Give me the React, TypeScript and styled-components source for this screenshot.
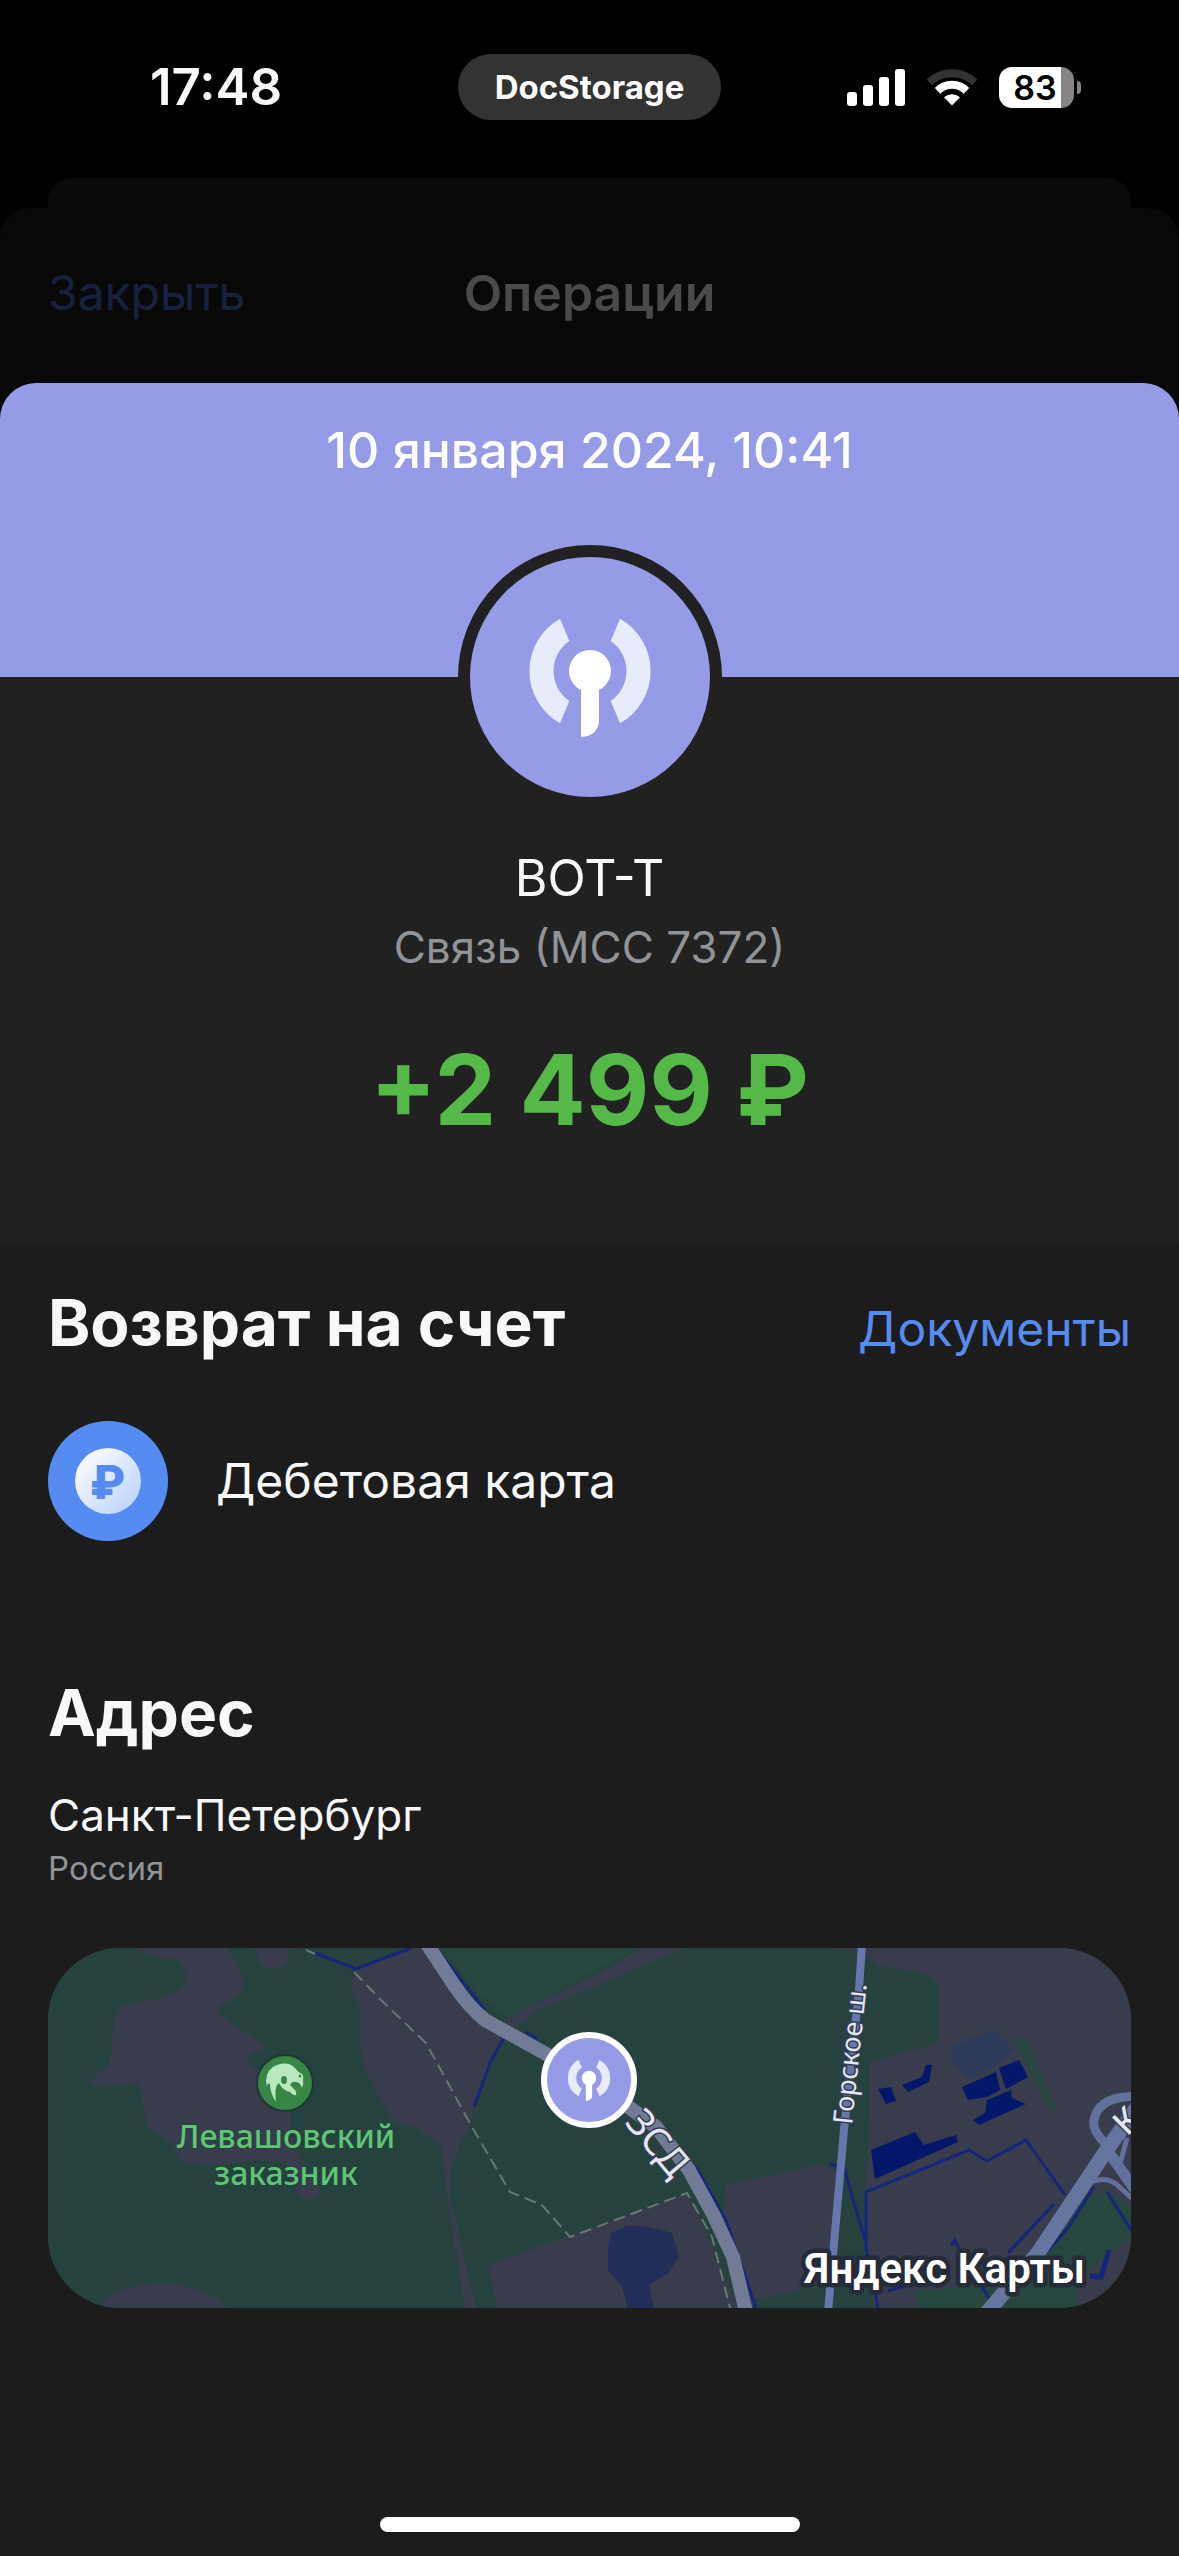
import React from "react";
import styled, { createGlobalStyle } from "styled-components";

const color = {
  lilac: "#959be6",
  panel: "#212121",
  page: "#1c1c1c",
  text: "#f8f8f8",
  muted: "#909499",
  blue: "#568bf2",
  green: "#54b946",
};

const GlobalStyle = createGlobalStyle`
  * { box-sizing: border-box; }
  body {
    margin: 0;
    background: #000;
    color: ${color.text};
    font-family: Inter, "Liberation Sans", sans-serif;
  }
  h1, h2, p { margin: 0; font-weight: inherit; }
  svg { display: block; }
`;

const Screen = styled.div`
  display: flex;
  flex-direction: column;
  min-height: 100vh;
`;

const StatusBar = styled.header`
  display: grid;
  grid-template-columns: 306px 1fr 358px;
  align-items: center;
  height: 178px;
  padding: 0 98px 4px 150px;
`;

const StatusIcons = styled.div`
  display: flex;
  align-items: center;
  justify-content: flex-end;
  gap: 22px;
`;

const Clock = styled.time`
  font-size: 51px;
  line-height: 60px;
  font-weight: 600;
`;

const PlainButton = styled.button`
  padding: 0;
  border: 0;
  background: none;
  font: inherit;
  cursor: pointer;
`;

const IslandPill = styled(PlainButton)`
  justify-self: center;
  height: 66px;
  padding: 0 37px;
  border-radius: 33px;
  background: #333;
  color: #fff;
  font-size: 33px;
  line-height: 42px;
  font-weight: 700;
`;

const Battery = styled.div`
  display: flex;
  align-items: center;
  gap: 3px;
`;

const BatteryBody = styled.div<{ $level: number }>`
  width: 75px;
  height: 41px;
  padding-right: 3px;
  border-radius: 13px;
  background: linear-gradient(to right, #fff ${(p) => p.$level}%, #858585 ${(p) => p.$level}%);
  color: #000;
  font-size: 34px;
  line-height: 42px;
  font-weight: 600;
  text-align: center;
`;

const BatteryTip = styled.div`
  width: 4px;
  height: 13px;
  border-radius: 0 6px 6px 0;
  background: #858585;
`;

const FarSheet = styled.div`
  height: 30px;
  margin: 0 48px;
  border-radius: 24px 24px 0 0;
  background: #0a0a0a;
`;

const NearSheet = styled.div`
  display: flex;
  flex-direction: column;
  flex: 1;
  border-radius: 30px 30px 0 0;
  background: #080808;
`;

const NavBar = styled.nav`
  display: grid;
  grid-template-columns: 1fr auto 1fr;
  align-items: center;
  height: 175px;
  padding: 0 48px 6px;
  font-size: 50px;
  line-height: 60px;
`;

const CloseButton = styled(PlainButton)`
  justify-self: start;
  color: #17213f;
  font-size: 48px;
`;

const NavTitle = styled.p`
  color: #4a4a4a;
  font-weight: 600;
`;

const Sheet = styled.main`
  display: flex;
  flex-direction: column;
  flex: 1;
  overflow: hidden;
  border-radius: 36px 36px 0 0;
  background: ${color.page};
`;

const Banner = styled.div`
  height: 294px;
  padding-top: 37px;
  background: ${color.lilac};
  color: #fff;
  font-size: 50px;
  line-height: 60px;
  font-weight: 500;
  text-align: center;
`;

const Summary = styled.section`
  display: flex;
  flex-direction: column;
  align-items: center;
  padding-bottom: 100px;
  background: linear-gradient(to top, ${color.page}, ${color.panel} 12px);
`;

const Avatar = styled.div`
  width: 264px;
  height: 264px;
  margin: -132px 0 39px;
  border: 12px solid ${color.panel};
  border-radius: 50%;
  background: ${color.lilac};
`;

const Merchant = styled.h1`
  font-size: 50px;
  line-height: 60px;
  font-weight: 400;
`;

const Category = styled.p`
  margin-top: 12px;
  color: ${color.muted};
  font-size: 44px;
  line-height: 54px;
`;

const Amount = styled.p`
  margin-top: 56px;
  color: ${color.green};
  font-size: 98px;
  line-height: 120px;
  font-weight: 700;
`;

const Section = styled.section<{ $top: number }>`
  padding: ${(p) => p.$top}px 48px 0;
`;

const SectionHead = styled.div`
  display: flex;
  align-items: baseline;
  justify-content: space-between;
`;

const SectionTitle = styled.h2`
  font-size: 64px;
  line-height: 72px;
  font-weight: 700;
`;

const DocsLink = styled.a`
  color: ${color.blue};
  font-size: 48px;
  line-height: 60px;
  text-decoration: none;
`;

const Account = styled.div`
  display: flex;
  align-items: center;
  gap: 48px;
  margin-top: 62px;
  font-size: 48px;
  line-height: 60px;
`;

const City = styled.p`
  margin-top: 39px;
  font-size: 44px;
  line-height: 54px;
`;

const Country = styled.p`
  margin-top: 5px;
  color: ${color.muted};
  font-size: 33px;
  line-height: 42px;
`;

const MapCard = styled.a`
  display: block;
  height: 360px;
  margin-top: 59px;
  overflow: hidden;
  border-radius: 72px;
  background: #26423f;
`;

const HomeBar = styled.div`
  width: 420px;
  height: 15px;
  margin: auto auto 24px;
  border-radius: 8px;
  background: #fff;
`;

function SignalIcon() {
  return (
    <svg width="58" height="38" viewBox="0 0 58 38" fill="#fff" aria-hidden="true">
      <rect x="0" y="24" width="10" height="14" rx="3" />
      <rect x="16" y="17" width="10" height="21" rx="3" />
      <rect x="32" y="9" width="10" height="29" rx="3" />
      <rect x="48" y="1" width="10" height="37" rx="3" />
    </svg>
  );
}

function WifiIcon() {
  return (
    <svg width="50" height="38" viewBox="0 0 50 38" fill="none" aria-hidden="true">
      <path d="M2.4 14.4A32.5 32.5 0 0 1 47.6 14.4" stroke="#333" strokeWidth="8" />
      <path d="M10.6 22.8A20.4 20.4 0 0 1 39.4 22.8" stroke="#fff" strokeWidth="8" />
      <path d="M25 37.5L17 29.3A11.8 11.8 0 0 1 33 29.3Z" fill="#fff" />
    </svg>
  );
}

function AntennaMark() {
  return (
    <>
      <g fill="#e8ebf9">
        <path d="M-30 -52.3A60 60 0 0 0 -30 52.3L-20.7 30A36.4 36.4 0 0 1 -20.7 -30Z" />
        <path d="M30 -52.3A60 60 0 0 1 30 52.3L20.7 30A36.4 36.4 0 0 0 20.7 -30Z" />
      </g>
      <path fill="#fff" d="M-9 19A21 21 0 1 1 9 19V50Q8 65 -9 66Z" />
    </>
  );
}

function RubleCoin() {
  return (
    <svg width="120" height="120" viewBox="0 0 120 120" aria-hidden="true">
      <defs>
        <linearGradient id="coin" x1="0" y1="0" x2="1" y2="1">
          <stop offset="0.2" stopColor="#f4f7fe" />
          <stop offset="1" stopColor="#b6cffb" />
        </linearGradient>
      </defs>
      <circle cx="60" cy="60" r="60" fill={color.blue} />
      <circle cx="60" cy="60" r="33" fill="url(#coin)" />
      <text
        x="60"
        y="78"
        textAnchor="middle"
        fontFamily='Roboto, "Noto Sans", sans-serif'
        fontSize="48"
        fontWeight="900"
        fill={color.blue}
      >
        ₽
      </text>
    </svg>
  );
}

function CityMap() {
  return (
    <svg
      width="100%"
      height="100%"
      viewBox="0 0 1083 360"
      preserveAspectRatio="xMidYMid slice"
      fontFamily='"Noto Sans", "Open Sans", sans-serif'
    >
      <rect width="1083" height="360" fill="#26423f" />
      <g fill="#383c4d">
        <path d="M85 0Q106 9 130 12Q140 22 137 36Q126 48 106 52Q84 53 78 57Q66 64 66 76L62 115L40 135Q52 142 88 134L94 149L99 179L124 195L131 212Q160 222 206 212L238 214L250 246Q262 258 274 244L262 225L250 205L242 182V159L230 145L206 119Q194 112 206 105L219 99Q200 84 196 85L171 65Q166 60 188 49Q197 40 196 32Q190 14 178 0Z" />
        <path d="M206 0L213 16Q224 26 238 17L242 0Z" />
        <path d="M306 24L360 0H374L406 42L456 85L426 159L421 182L410 199L403 222L402 250L410 282L428 360H417L399 249L393 198L367 179L349 175Q338 166 321 129Q308 104 313 62L303 42Z" />
        <path d="M456 72L478 60L549 27L593 0H639L600 15L532 45L490 62L468 80Z" />
        <path d="M48 360Q66 338 113 335Q152 336 181 360Z" />
        <path d="M440 317L532 284L639 245L665 300L690 360H449Z" />
        <path d="M677 237L775 216L790 225L782 335L715 350L704 350L676 268Z" />
        <path d="M780 0H1083V360H826L818 302L817 242L820 212L822 115L864 102Q892 98 891 86V42Q890 30 868 23L832 18L812 4Z" />
      </g>
      <g fill="#26463f">
        <path d="M868 342L950 338L940 360H868Z" />
        <path d="M1017 259L1059 242L1083 259V289L1029 332V360H952L990 315Z" />
        <path d="M964 89L979 92L1009 162H1002Z" />
        <path d="M392 0H590L480 58L462 70L430 46Z" />
      </g>
      <path
        fill="#222e57"
        d="M563 285L578 278Q596 276 624 285L631 309L620 325L601 337L606 360H580L574 339L560 322V300Z"
      />
      <path fill="#2b3a58" d="M904 99L945 81L965 102L952 115L922 132L903 112Z" />
      <g fill="#04176b">
        <path d="M830 141L843 139L848 153L838 156Z" />
        <path d="M878 117H884L881 134L860 144L854 137L874 129Z" />
        <path d="M914 139L948 124L952 142L939 149L920 152Z" />
        <path d="M951 120L971 112L980 129L958 141Z" />
        <path d="M939 152L963 142L964 150L978 156L931 177L925 172L937 165Z" />
        <path d="M823 202L867 184L876 197L908 187L910 194L827 231Z" />
      </g>
      <g fill="none" stroke="#14257a" strokeWidth="3">
        <path d="M267 5L308 21L363 0M388 0L413 32L437 62M456 89L442 115L426 159M478 84L490 91" />
        <path d="M1017 247L978 192L939 213L921 202L818 244V299L830 360" />
        <path d="M782 216L796 220L817 292M1006 256L960 305M1046 239L1020 280L948 360" />
        <path d="M1059 244L1083 282M903 297L907 292L915 310L941 350M840 343L900 324" />
        <path d="M1061 302L1053 329L1042 328" strokeWidth="5" />
        <path d="M648 219L678 272L708 360" />
      </g>
      <g fill="none" stroke="#66786f" strokeWidth="2" strokeDasharray="12 6">
        <path d="M258 2L267 6M306 24L335 54L378 95L424 179L462 244L494 257L522 289L639 245L664 289L682 360" />
      </g>
      <g fill="none">
        <path d="M379 -4L406 37Q420 58 437 72L541 130L608 179L641 222L666 268L685 309L698 364" stroke="#727b95" strokeWidth="14" />
        <path d="M814 -4L811 42L796 182L780 364" stroke="#6677ad" strokeWidth="8" />
        <path d="M1090 148Q1050 148 1046 172Q1044 182 1056 194" stroke="#61709c" strokeWidth="9" />
        <path d="M1062 206L1090 246" stroke="#61709c" strokeWidth="11" />
        <path d="M1036 238Q1054 226 1068 236L1088 254M1079 190L1072 216" stroke="#61709c" strokeWidth="5" />
        <path d="M936 368L990 305L1060 200L1090 158" stroke="#65759f" strokeWidth="15" />
      </g>
      <g fill="#e4e8ee" stroke="#343c55" strokeWidth="3" paintOrder="stroke">
        <text x="576" y="175" fontSize="38" transform="rotate(50 576 175)">
          ЗСД
        </text>
        <text x="804" y="177" fontSize="27" transform="rotate(-84 804 177)">
          Горское ш.
        </text>
        <text x="1079" y="189" fontSize="34" fontWeight="500" transform="rotate(-45 1079 189)">
          К
        </text>
      </g>
      <circle cx="237" cy="135" r="29" fill="#1f3536" />
      <circle cx="237" cy="135" r="27" fill="#378645" />
      <path
        fill="#b9e8be"
        d="M218 133Q219 120 229 117Q240 113 247 120Q250 124 252 125Q256 126 255 131Q256 136 254 140Q252 134 248 134Q244 133 242 137L246 141Q249 143 248 147Q245 148 242 144Q235 143 231 135Q226 138 228 154Q222 145 222 136Q219 134 219 139Z"
      />
      <ellipse cx="236" cy="132" rx="3" ry="4" fill="#378645" />
      <circle cx="252" cy="128" r="1.5" fill="#378645" />
      <g fill="#5fc474" fontSize="32" fontWeight="500" textAnchor="middle" stroke="#26423f" strokeWidth="2" paintOrder="stroke">
        <text x="238" y="200">Левашовский</text>
        <text x="238" y="237">заказник</text>
      </g>
      <circle cx="541" cy="132" r="45" fill={color.lilac} stroke="#fff" strokeWidth="6" />
      <g transform="translate(541 130) scale(0.35)">
        <AntennaMark />
      </g>
      <text
        x="1037"
        y="335"
        textAnchor="end"
        fontFamily='Roboto, "Noto Sans", sans-serif'
        fontSize="42"
        fontWeight="600"
        fill="#fff"
        stroke="#252b38"
        strokeWidth="9"
        strokeLinejoin="round"
        paintOrder="stroke"
      >
        Яндекс Карты
      </text>
    </svg>
  );
}

export default function App() {
  return (
    <Screen>
      <GlobalStyle />
      <StatusBar>
        <Clock>17:48</Clock>
        <IslandPill type="button">DocStorage</IslandPill>
        <StatusIcons>
          <SignalIcon />
          <WifiIcon />
          <Battery>
            <BatteryBody $level={83}>83</BatteryBody>
            <BatteryTip />
          </Battery>
        </StatusIcons>
      </StatusBar>
      <FarSheet />
      <NearSheet>
        <NavBar>
          <CloseButton type="button">Закрыть</CloseButton>
          <NavTitle>Операции</NavTitle>
        </NavBar>
        <Sheet>
          <Banner>10 января 2024, 10:41</Banner>
          <Summary>
            <Avatar>
              <svg viewBox="-120 -120 240 240" aria-hidden="true">
                <g transform="translate(0 -6)">
                  <AntennaMark />
                </g>
              </svg>
            </Avatar>
            <Merchant>BOT-T</Merchant>
            <Category>Связь (МСС 7372)</Category>
            <Amount>+2 499 ₽</Amount>
          </Summary>
          <Section $top={37}>
            <SectionHead>
              <SectionTitle>Возврат на счет</SectionTitle>
              <DocsLink href="#documents">Документы</DocsLink>
            </SectionHead>
            <Account>
              <RubleCoin />
              <p>Дебетовая карта</p>
            </Account>
          </Section>
          <Section $top={136}>
            <SectionTitle>Адрес</SectionTitle>
            <City>Санкт-Петербург</City>
            <Country>Россия</Country>
            <MapCard href="#map">
              <CityMap />
            </MapCard>
          </Section>
          <HomeBar />
        </Sheet>
      </NearSheet>
    </Screen>
  );
}
